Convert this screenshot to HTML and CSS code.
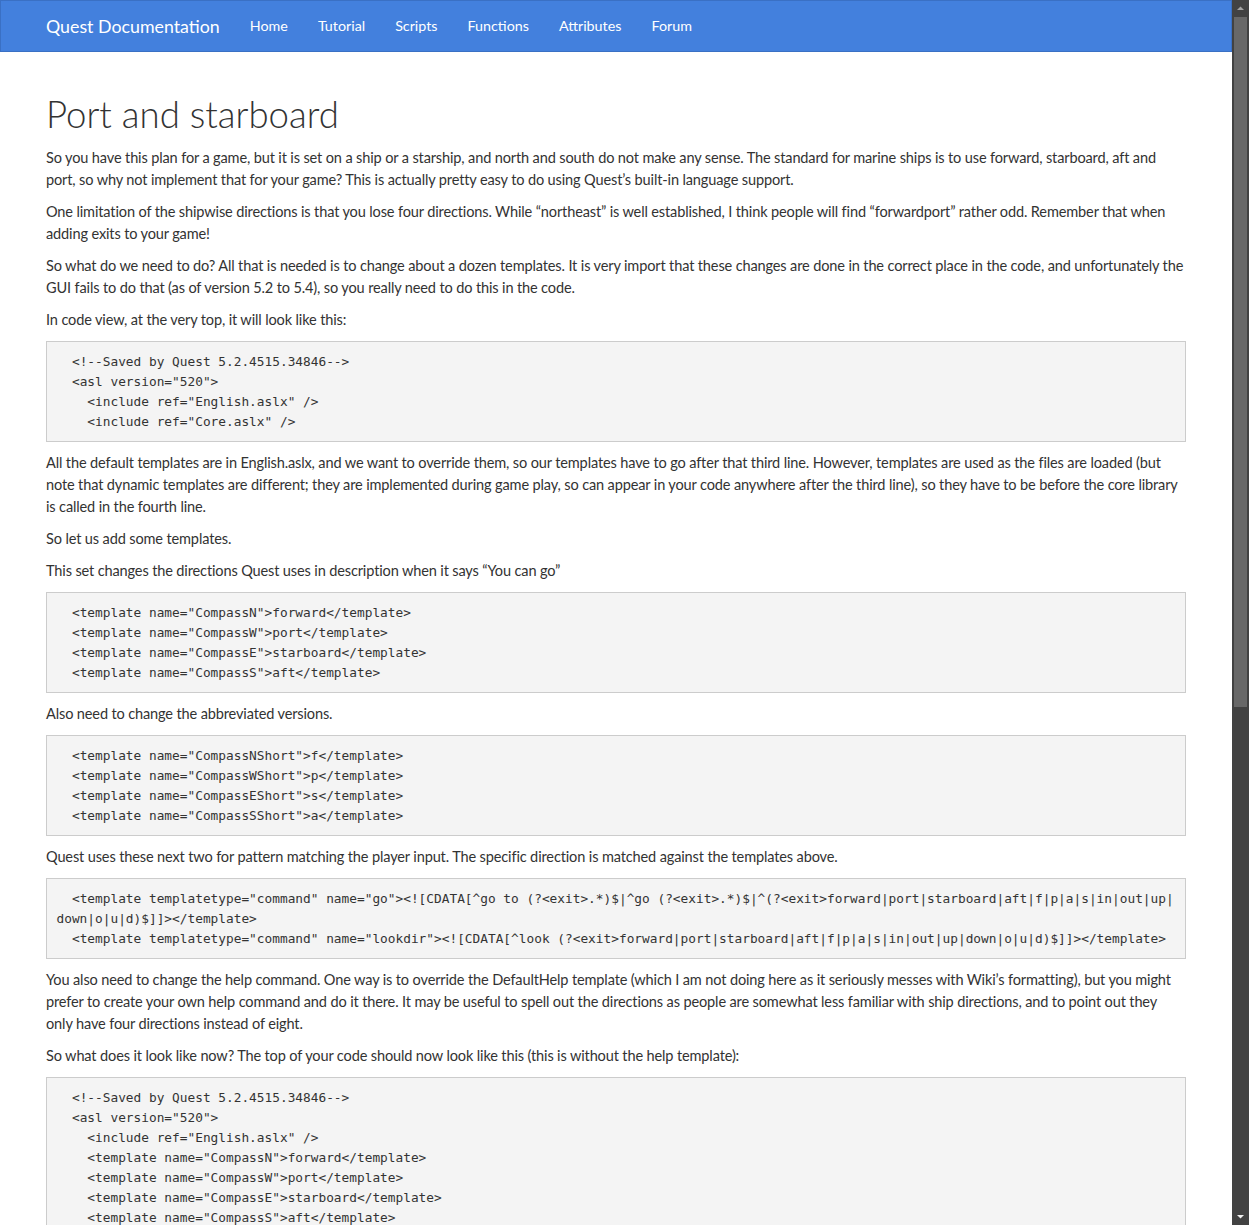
FILE: index.html
```html
<!DOCTYPE html>
<html lang="en">
<head>
<meta charset="utf-8">
<title>Port and starboard - Quest Documentation</title>
<link rel="stylesheet" href="styles.css">
</head>
<body>
<div class="page">
<nav class="navbar">
  <div class="container nav-inner">
    <a class="brand" href="#">Quest Documentation</a>
    <ul class="nav-links">
      <li><a href="#">Home</a></li>
      <li><a href="#">Tutorial</a></li>
      <li><a href="#">Scripts</a></li>
      <li><a href="#">Functions</a></li>
      <li><a href="#">Attributes</a></li>
      <li><a href="#">Forum</a></li>
    </ul>
  </div>
</nav>
<main class="container content">
<h1>Port and starboard</h1>
<p>So you have this plan for a game, but it is set on a ship or a starship, and north and south do not make any sense. The standard for marine ships is to use forward, starboard, aft and port, so why not implement that for your game? This is actually pretty easy to do using Quest’s built-in language support.</p>
<p>One limitation of the shipwise directions is that you lose four directions. While “northeast” is well established, I think people will find “forwardport” rather odd. Remember that when adding exits to your game!</p>
<p>So what do we need to do? All that is needed is to change about a dozen templates. It is very import that these changes are done in the correct place in the code, and unfortunately the GUI fails to do that (as of version 5.2 to 5.4), so you really need to do this in the code.</p>
<p>In code view, at the very top, it will look like this:</p>
<pre><code>  &lt;!--Saved by Quest 5.2.4515.34846--&gt;
  &lt;asl version="520"&gt;
    &lt;include ref="English.aslx" /&gt;
    &lt;include ref="Core.aslx" /&gt;</code></pre>
<p>All the default templates are in English.aslx, and we want to override them, so our templates have to go after that third line. However, templates are used as the files are loaded (but note that dynamic templates are different; they are implemented during game play, so can appear in your code anywhere after the third line), so they have to be before the core library is called in the fourth line.</p>
<p>So let us add some templates.</p>
<p>This set changes the directions Quest uses in description when it says “You can go”</p>
<pre><code>  &lt;template name="CompassN"&gt;forward&lt;/template&gt;
  &lt;template name="CompassW"&gt;port&lt;/template&gt;
  &lt;template name="CompassE"&gt;starboard&lt;/template&gt;
  &lt;template name="CompassS"&gt;aft&lt;/template&gt;</code></pre>
<p>Also need to change the abbreviated versions.</p>
<pre><code>  &lt;template name="CompassNShort"&gt;f&lt;/template&gt;
  &lt;template name="CompassWShort"&gt;p&lt;/template&gt;
  &lt;template name="CompassEShort"&gt;s&lt;/template&gt;
  &lt;template name="CompassSShort"&gt;a&lt;/template&gt;</code></pre>
<p>Quest uses these next two for pattern matching the player input. The specific direction is matched against the templates above.</p>
<pre><code>  &lt;template templatetype="command" name="go"&gt;&lt;![CDATA[^go to (?&lt;exit&gt;.*)$|^go (?&lt;exit&gt;.*)$|^(?&lt;exit&gt;forward|port|starboard|aft|f|p|a|s|in|out|up|down|o|u|d)$]]&gt;&lt;/template&gt;
  &lt;template templatetype="command" name="lookdir"&gt;&lt;![CDATA[^look (?&lt;exit&gt;forward|port|starboard|aft|f|p|a|s|in|out|up|down|o|u|d)$]]&gt;&lt;/template&gt;</code></pre>
<p>You also need to change the help command. One way is to override the DefaultHelp template (which I am not doing here as it seriously messes with Wiki’s formatting), but you might prefer to create your own help command and do it there. It may be useful to spell out the directions as people are somewhat less familiar with ship directions, and to point out they only have four directions instead of eight.</p>
<p>So what does it look like now? The top of your code should now look like this (this is without the help template):</p>
<pre><code>  &lt;!--Saved by Quest 5.2.4515.34846--&gt;
  &lt;asl version="520"&gt;
    &lt;include ref="English.aslx" /&gt;
    &lt;template name="CompassN"&gt;forward&lt;/template&gt;
    &lt;template name="CompassW"&gt;port&lt;/template&gt;
    &lt;template name="CompassE"&gt;starboard&lt;/template&gt;
    &lt;template name="CompassS"&gt;aft&lt;/template&gt;
    &lt;template name="CompassNShort"&gt;f&lt;/template&gt;
    &lt;template name="CompassWShort"&gt;p&lt;/template&gt;
    &lt;template name="CompassEShort"&gt;s&lt;/template&gt;
    &lt;template name="CompassSShort"&gt;a&lt;/template&gt;
    &lt;include ref="Core.aslx" /&gt;</code></pre>
</main>
</div>
<div class="scrollbar" aria-hidden="true">
  <div class="sb-btn">
    <svg width="17" height="17" viewBox="0 0 17 17"><polygon points="5,10 12,10 8.5,6.5" fill="#a3a3a3"/></svg>
  </div>
  <div class="sb-track"><div class="sb-thumb"></div></div>
  <div class="sb-btn">
    <svg width="17" height="17" viewBox="0 0 17 17"><polygon points="5,7 12,7 8.5,10.5" fill="#f0f0f0"/></svg>
  </div>
</div>
</body>
</html>
```

FILE: styles.css
```css
html {
  background: #fff;
}
body {
  margin: 0;
  font-family: Lato, "Liberation Sans", sans-serif;
  font-size: 14.55px;
  letter-spacing: -0.14px;
  line-height: 22px;
  color: #333;
  background: #fff;
}
.page {
  width: 1232px;
}
.scrollbar {
  position: fixed;
  top: 0;
  right: 0;
  width: 17px;
  height: 100vh;
  background: #424242;
  display: flex;
  flex-direction: column;
}
.sb-btn {
  height: 17px;
  flex: none;
}
.sb-btn svg {
  display: block;
}
.sb-track {
  flex: 1;
  padding: 0 2px;
}
.sb-thumb {
  height: 690px;
  background: #686868;
}
.container {
  width: 1170px;
  margin: 0 auto;
  padding: 0 15px;
  box-sizing: border-box;
}
.navbar {
  background: #4380dd;
  border: 1px solid #3a70c4;
  height: 52px;
  box-sizing: border-box;
  margin-bottom: 20px;
}
.nav-inner {
  display: flex;
  align-items: center;
  height: 50px;
}
.brand {
  color: #fff;
  text-decoration: none;
  font-size: 17.8px;
  letter-spacing: 0;
  line-height: 20px;
  padding: 15px 15px 15px 0;
}
.nav-links {
  display: flex;
  list-style: none;
  margin: 0;
  padding: 0;
}
.nav-links a {
  display: block;
  color: #fff;
  text-decoration: none;
  padding: 15px;
  line-height: 20px;
  font-size: 14.3px;
  letter-spacing: 0;
}
.content {
  padding-top: 20px;
}
h1 {
  font-weight: 300;
  font-size: 36.6px;
  letter-spacing: 0;
  line-height: 45px;
  margin: 0 0 10px;
  color: #333;
}
p {
  margin: 0 0 10px;
}
pre {
  margin: 0 0 10px;
  padding: 9.5px;
  background: #f4f4f4;
  border: 1px solid #ccc;
  border-radius: 0;
  font-family: "DejaVu Sans Mono", "Liberation Mono", monospace;
  font-size: 12.8px;
  letter-spacing: 0;
  line-height: 20px;
  color: #333;
  white-space: pre-wrap;
  word-break: break-all;
}
pre code {
  font-family: inherit;
}
```
